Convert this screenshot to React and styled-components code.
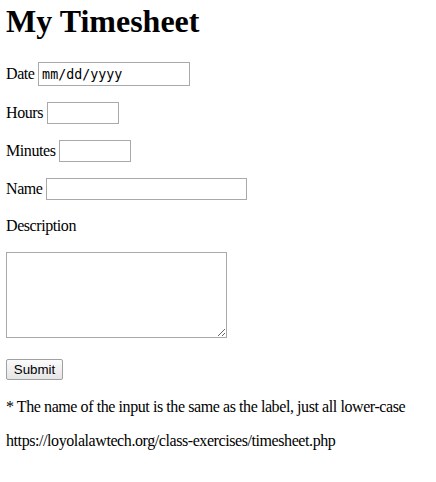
import styled, { createGlobalStyle } from "styled-components";

const GlobalStyle = createGlobalStyle`
	body {
		margin: 0 6px;
		padding-top: 3px;
		font-family: "Liberation Serif", "Times New Roman", serif;
		font-size: 16px;
		letter-spacing: -0.42px;
		color: #000;
		background: #fff;
	}
`;

const Title = styled.h1`
	font-size: 32px;
	font-weight: bold;
	letter-spacing: 0;
	margin: 0 0 22px;
`;

const Field = styled.p`
	margin: 0 0 ${(props) => props.$gap || 16}px;
`;

const TextInput = styled.input`
	width: ${(props) => props.$width}px;
	height: ${(props) => (props.$mono ? 24 : 22)}px;
	box-sizing: border-box;
	border: 1px solid #a9a9a9;
	padding: 1px 3px;
	color: #000;
	letter-spacing: 0;
	font-family: ${(props) =>
		props.$mono ? '"DejaVu Sans Mono", monospace' : '"Liberation Sans", Arial, sans-serif'};
	font-size: 13.33px;
	vertical-align: baseline;
`;

const TextArea = styled.textarea`
	display: inline-block;
	width: 221px;
	height: 86px;
	box-sizing: border-box;
	border: 1px solid #a9a9a9;
	font-family: "DejaVu Sans Mono", monospace;
	font-size: 13.33px;
`;

const SubmitButton = styled.button`
	width: 57px;
	height: 21px;
	box-sizing: border-box;
	padding: 1px 6px;
	letter-spacing: 0;
	font-family: "Liberation Sans", Arial, sans-serif;
	font-size: 13.33px;
	color: #000;
	background: linear-gradient(#fbfbfb, #e5e5e5);
	border: 1px solid #a0a0a0;
	border-radius: 2px;
`;

const Note = styled.p`
	margin: 0 0 16px;
`;

const App = () => {
	return (
		<>
			<GlobalStyle />
			<Title>My Timesheet</Title>
			<form>
				<Field $gap={16}>
					Date <TextInput type="text" name="date" defaultValue="mm/dd/yyyy" $width={152} $mono />
				</Field>
				<Field>
					Hours <TextInput type="text" name="hours" $width={72} />
				</Field>
				<Field>
					Minutes <TextInput type="text" name="minutes" $width={72} />
				</Field>
				<Field $gap={17}>
					Name <TextInput type="text" name="name" $width={201} />
				</Field>
				<Field $gap={17}>Description</Field>
				<Field $gap={17}>
					<TextArea name="description" />
				</Field>
				<Field $gap={18}>
					<SubmitButton type="submit">Submit</SubmitButton>
				</Field>
			</form>
			<Note>* The name of the input is the same as the label, just all lower-case</Note>
			<Note>https://loyolalawtech.org/class-exercises/timesheet.php</Note>
		</>
	);
};

export default App;
